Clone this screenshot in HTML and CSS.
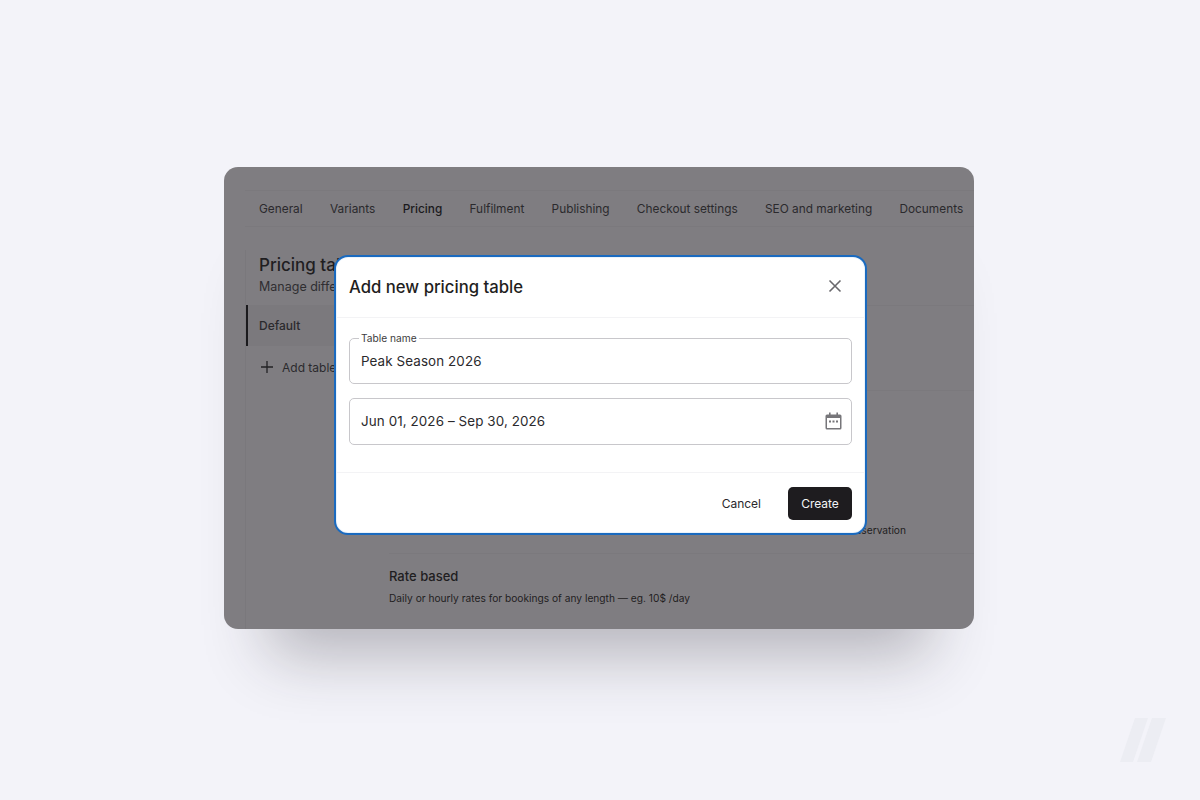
FILE: index.html
```html
<!DOCTYPE html>
<html lang="en">
<head>
    <meta charset="UTF-8">
    <meta name="viewport" content="width=device-width, initial-scale=1.0">
    <title>Add new pricing table</title>
    <link rel="stylesheet" href="styles.css">
</head>
<body>
    <div class="panel">
        <nav class="tabs">
            <a class="tab">General</a>
            <a class="tab">Variants</a>
            <a class="tab tab-active">Pricing</a>
            <a class="tab">Fulfilment</a>
            <a class="tab">Publishing</a>
            <a class="tab">Checkout settings</a>
            <a class="tab">SEO and marketing</a>
            <a class="tab">Documents</a>
        </nav>

        <div class="content">
            <aside class="sidebar">
                <h2 class="sidebar-title">Pricing tables</h2>
                <p class="sidebar-sub">Manage different prices</p>
                <div class="table-item">Default</div>
                <div class="add-table">
                    <svg class="plus" width="14" height="14" viewBox="0 0 14 14"><path d="M7 1v12M1 7h12"/></svg>
                    <span>Add table</span>
                </div>
            </aside>
            <main class="main">
                <div class="option option-first"></div>
                <div class="option option-second"></div>
                <div class="option option-third">
                    <p class="option-desc option-desc-long">Flat rate for each reservation</p>
                </div>
                <div class="option">
                    <h3 class="option-title">Rate based</h3>
                    <p class="option-desc">Daily or hourly rates for bookings of any length — eg. 10$ /day</p>
                </div>
            </main>
        </div>

        <div class="modal">
            <header class="modal-head">
                <h2 class="modal-title">Add new pricing table</h2>
                <svg class="close" width="14" height="14" viewBox="0 0 14 14"><path d="M1.500 1.500l11 11M12.500 1.500l-11 11"/></svg>
            </header>
            <div class="modal-body">
                <fieldset class="field">
                    <legend class="field-label">Table name</legend>
                    <span class="field-value">Peak Season 2026</span>
                </fieldset>
                <div class="field field-date">
                    <span class="field-value">Jun 01, 2026 – Sep 30, 2026</span>
                    <svg class="calendar" width="17" height="18" viewBox="0 0 17 18">
                        <path class="cal-frame" d="M4 0.500h1.600v2h5.800v-2H13v2h2a1.500 1.500 0 0 1 1.500 1.500v12a1.500 1.500 0 0 1-1.500 1.500H2A1.500 1.500 0 0 1 .5 16V4A1.500 1.500 0 0 1 2 2.500h2z"/>
                        <rect class="cal-page" x="2" y="6" width="13" height="10"/>
                        <rect class="cal-frame" x="4" y="8.500" width="2" height="2"/>
                        <rect class="cal-frame" x="7.500" y="8.500" width="2" height="2"/>
                        <rect class="cal-frame" x="11" y="8.500" width="2" height="2"/>
                    </svg>
                </div>
            </div>
            <footer class="modal-foot">
                <button class="btn">Cancel</button>
                <button class="btn btn-primary">Create</button>
            </footer>
        </div>
    </div>

    <svg class="logo" width="46" height="46" viewBox="0 0 46 46">
        <path d="M15 1h13L13 45H0zM32 1h14L31 45H17z"/>
    </svg>
</body>
</html>
```

FILE: styles.css
```css
* {
    box-sizing: border-box;
}

body {
    margin: 0;
    height: 800px;
    padding: 167px 2px 0 0;
    overflow: hidden;
    position: relative;
    display: flex;
    justify-content: center;
    align-items: flex-start;
    background-color: #f3f3f9;
    font-family: Inter, "Liberation Sans", sans-serif;
    color: #1f1e21;
}

p, h2, h3 {
    margin: 0;
}

.panel {
    position: relative;
    width: 750px;
    height: 462px;
    padding: 23px 0 0 21px;
    background-color: #7f7d81;
    border-radius: 14px;
    box-shadow: 0 71px 60px -45px rgba(40, 38, 46, 0.3);
}

.tabs {
    display: flex;
    gap: 27.3px;
    height: 37px;
    align-items: center;
    padding-left: 14px;
    border-top: 1px solid #7b797d;
    border-bottom: 1px solid #7b797d;
    white-space: nowrap;
    font-size: 11.85px;
    color: #2b2a2d;
}

.tab-active {
    font-weight: 500;
    color: #1b1a1d;
}

.content {
    display: flex;
    height: 402px;
}

.sidebar {
    width: 144px;
    flex-shrink: 0;
    margin-top: 23px;
    padding-top: 4px;
    border-left: 1px solid #7a787c;
}

.sidebar-title {
    padding-left: 13px;
    font-size: 17px;
    line-height: 22px;
    font-weight: 500;
    white-space: nowrap;
}

.sidebar-sub {
    padding-left: 13px;
    margin-top: 3px;
    font-size: 12.5px;
    line-height: 16px;
    white-space: nowrap;
    color: #2f2e31;
}

.table-item {
    margin-top: 10px;
    height: 41px;
    padding-left: 11px;
    display: flex;
    align-items: center;
    border-left: 2px solid #1b1a1d;
    background-color: #7b797d;
    font-size: 12px;
    font-weight: 500;
    color: #2b2a2d;
}

.add-table {
    display: flex;
    align-items: center;
    gap: 8px;
    margin-top: 11px;
    height: 20px;
    padding-left: 14px;
    font-size: 12px;
    color: #2b2a2d;
    white-space: nowrap;
}

.plus {
    flex-shrink: 0;
}

.plus path {
    fill: none;
    stroke: #232225;
    stroke-width: 1.3;
}

.main {
    flex: 1;
    min-width: 0;
}

.option {
    white-space: nowrap;
}

.option-first {
    height: 79px;
    border-bottom: 1px solid #7b797d;
}

.option-second {
    height: 85px;
    border-bottom: 1px solid #7b797d;
}

.option-third {
    height: 163px;
    padding-bottom: 16px;
    display: flex;
    align-items: flex-end;
    border-bottom: 1px solid #7b797d;
}

.option-title {
    margin-top: 13px;
    font-size: 13px;
    line-height: 18px;
    font-weight: 500;
}

.option-desc {
    margin-top: 6px;
    font-size: 10.2px;
    line-height: 14px;
    color: #1f1e21;
}

/* runs behind the dialog, only the end of the line shows past it */
.option-desc-long {
    width: 517px;
    text-align: right;
}

/* dialog sits over the dimmed page */
.modal {
    position: absolute;
    left: 110px;
    top: 88px;
    width: 533px;
    height: 280px;
    display: flex;
    flex-direction: column;
    background-color: #fff;
    border: 2px solid #1a6abf;
    border-radius: 14px;
    box-shadow: inset 0 0 0 1px #eaf3fb;
}

.modal-head {
    height: 61px;
    flex-shrink: 0;
    display: flex;
    align-items: center;
    justify-content: space-between;
    padding: 0 23px 1px 13px;
    border-bottom: 1px solid #f3f3f5;
}

.modal-title {
    font-size: 16.7px;
    font-weight: 500;
    color: #1f1e21;
}

.close {
    margin-bottom: 2px;
}

.close path {
    fill: none;
    stroke: #69686c;
    stroke-width: 1.6;
}

.modal-body {
    height: 155px;
    flex-shrink: 0;
    padding: 14px 13px 0;
    border-bottom: 1px solid #f3f3f5;
}

.field {
    margin: 0;
    padding: 0 11px;
    width: 503px;
    height: 52px;
    border: 1px solid #c8c7cb;
    border-radius: 5px;
    min-width: 0;
}

.field-label {
    padding: 0 2px;
    margin-left: -2px;
    font-size: 10.2px;
    line-height: 12px;
    color: #3d3c40;
}

.field-value {
    display: block;
    font-size: 13.4px;
    line-height: 18px;
    margin-top: 8px;
    letter-spacing: 0.1px;
    color: #2a292c;
}

.field-date {
    height: 47px;
    margin-top: 14px;
    display: flex;
    align-items: center;
    justify-content: space-between;
    padding: 0 9px 1px 11px;
}

.field-date .field-value {
    margin-top: 0;
}

.cal-frame {
    fill: #77767a;
}

.cal-page {
    fill: #fff;
}

.modal-foot {
    flex: 1;
    display: flex;
    align-items: center;
    justify-content: flex-end;
    padding: 1px 13px 0;
}

.btn {
    height: 33px;
    padding: 0 13px;
    border: none;
    border-radius: 5px;
    background: none;
    font-family: inherit;
    font-size: 12px;
    font-weight: 400;
    color: #2a292c;
    margin-left: 14px;
}

.btn-primary {
    width: 64px;
    background-color: #1e1c1f;
    color: #f4f4f6;
}

.logo {
    position: absolute;
    left: 1120px;
    top: 717px;
}

.logo path {
    fill: #ecedf3;
}
```
